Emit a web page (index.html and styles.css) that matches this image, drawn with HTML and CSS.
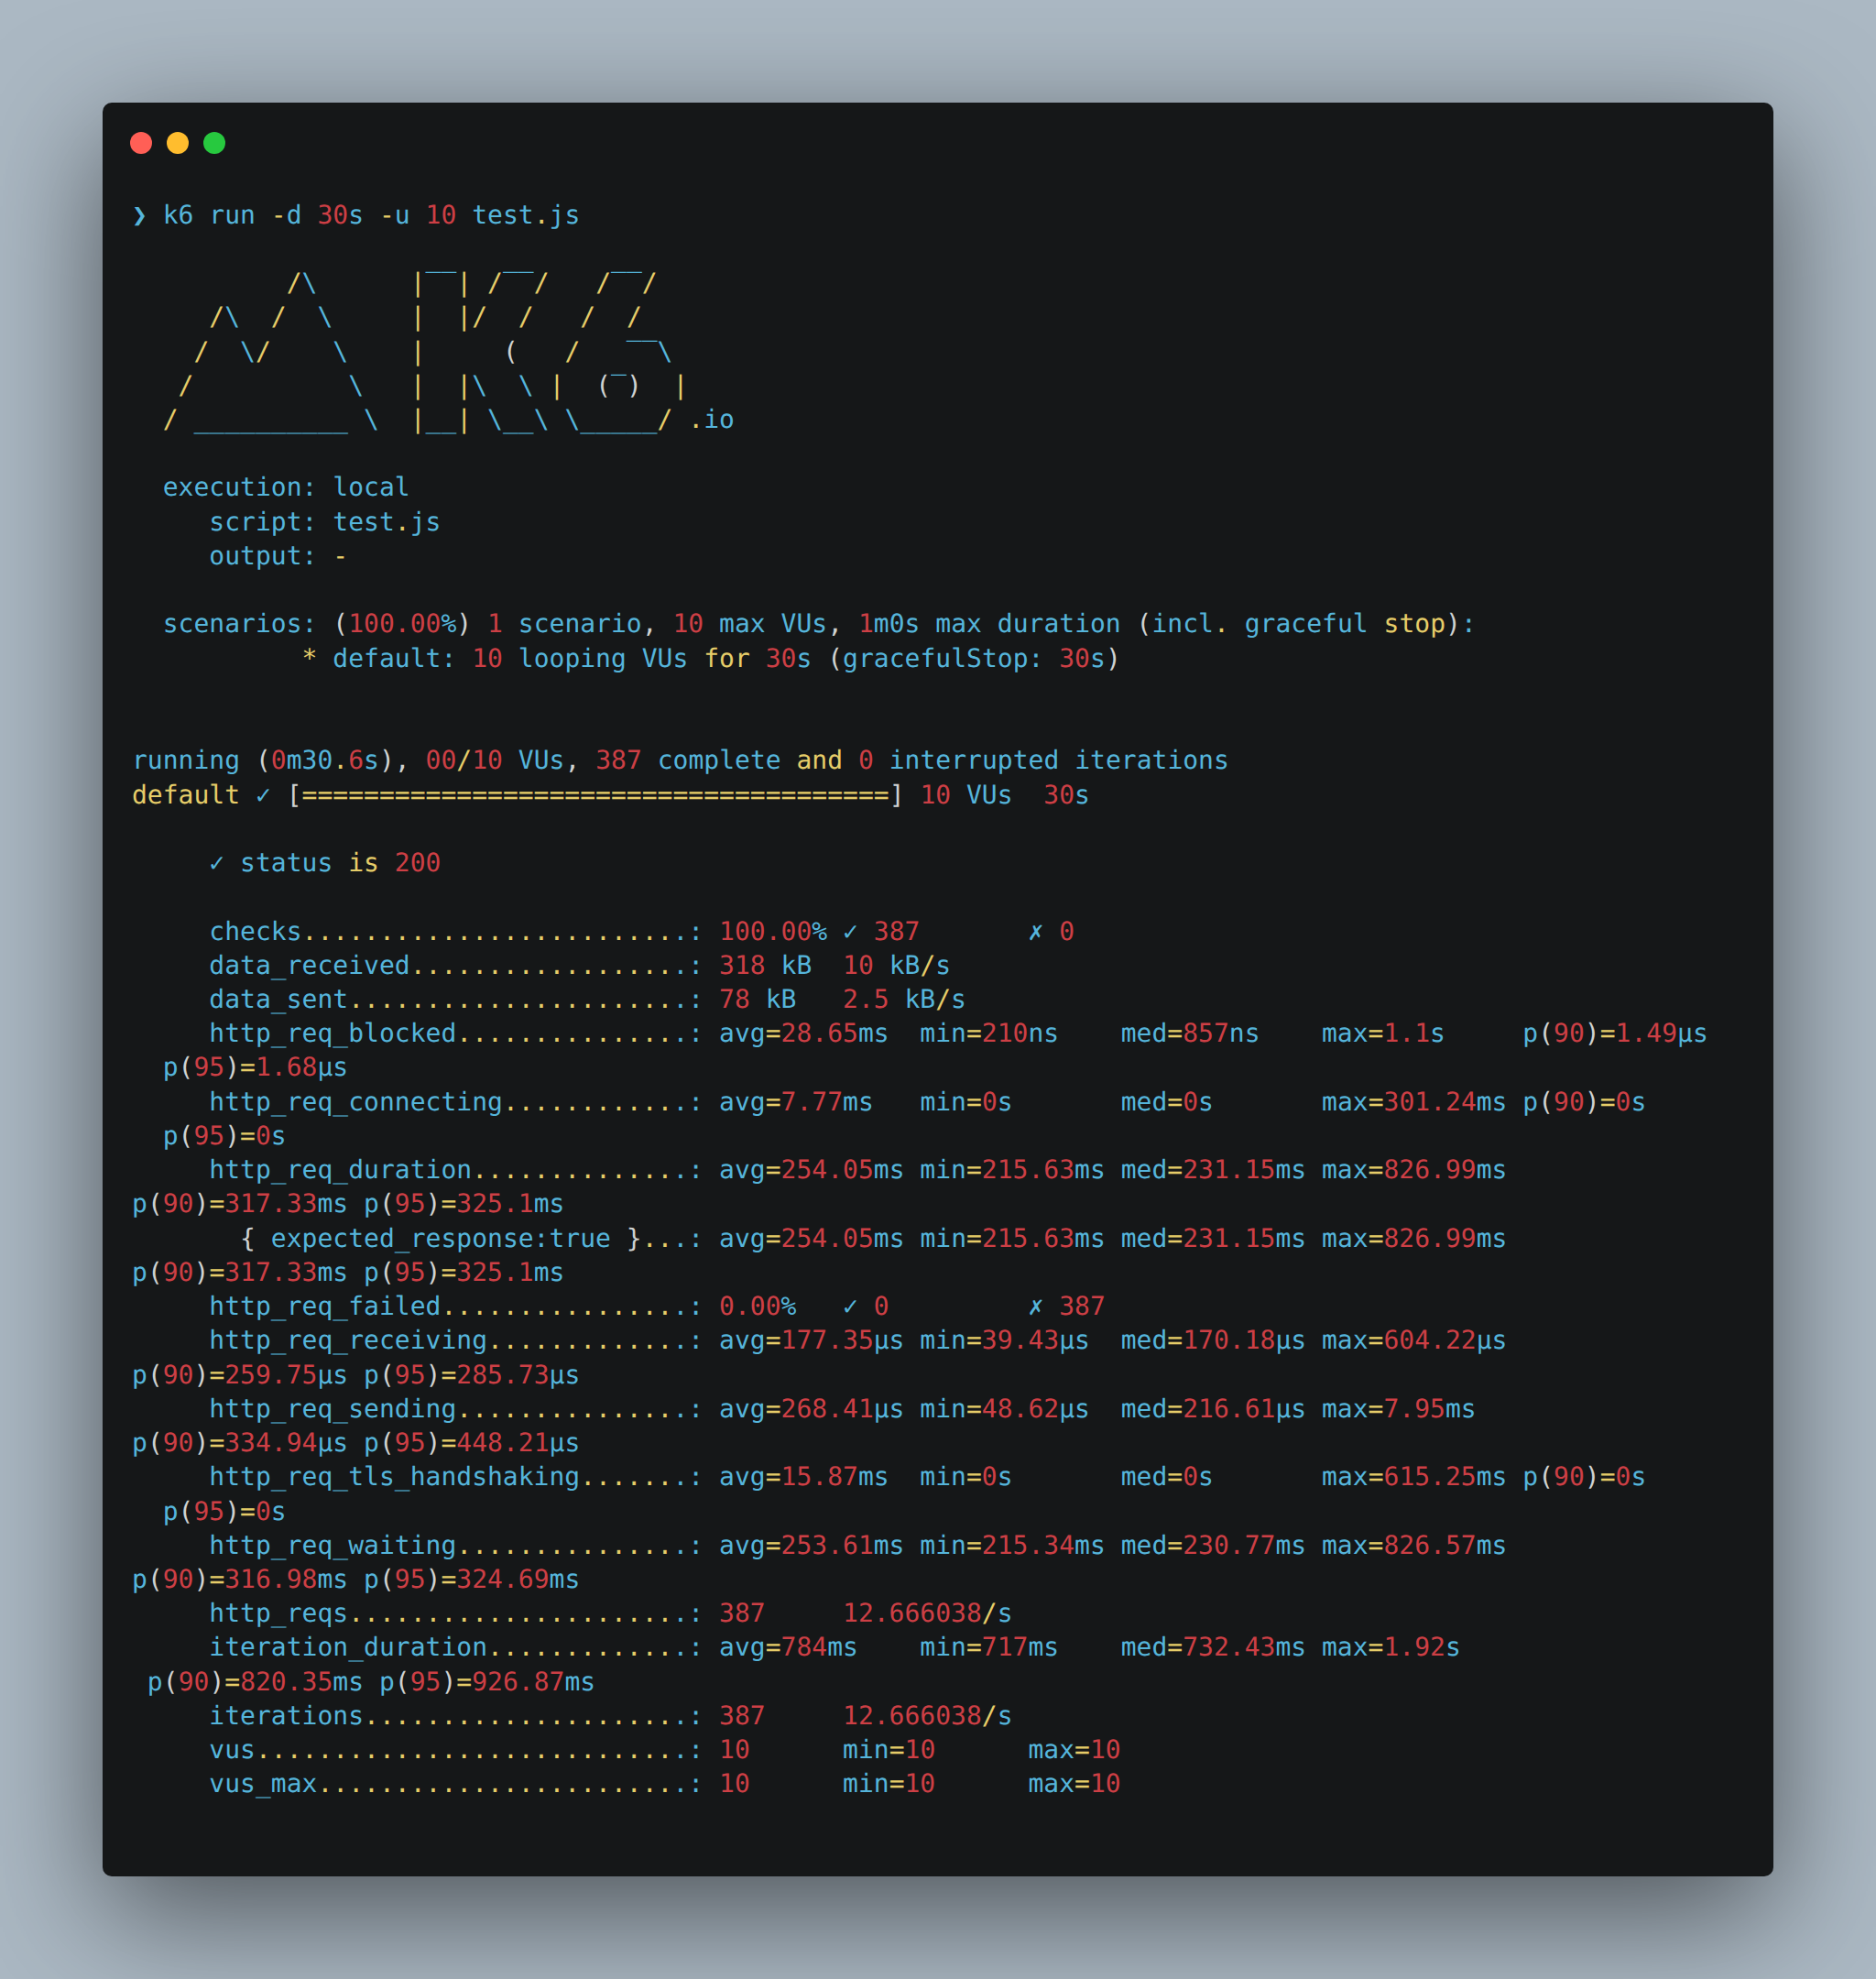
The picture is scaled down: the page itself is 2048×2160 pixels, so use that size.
FILE: index.html
```html
<!DOCTYPE html>
<html lang="en">
<head>
<meta charset="utf-8">
<title>k6 run</title>
<link rel="stylesheet" href="styles.css">
</head>
<body>
<main class="window">
<header class="titlebar"><span class="dot red"></span><span class="dot amber"></span><span class="dot green"></span></header>
<section class="code">
<div class="ln">❯ k6 run <i class="y">-</i>d <i class="r">30</i>s <i class="y">-</i>u <i class="r">10</i> test<i class="y">.</i>js</div>
<div class="ln"></div>
<div class="ln">          <i class="y">/</i>\      <i class="y">|</i>‾‾<i class="y">|</i> <i class="y">/</i>‾‾<i class="y">/</i>   <i class="y">/</i>‾‾<i class="y">/</i></div>
<div class="ln">     <i class="y">/</i>\  <i class="y">/</i>  \     <i class="y">|</i>  <i class="y">|/</i>  <i class="y">/</i>   <i class="y">/</i>  <i class="y">/</i></div>
<div class="ln">    <i class="y">/</i>  \<i class="y">/</i>    \    <i class="y">|</i>     <i class="w">(</i>   <i class="y">/</i>   ‾‾\</div>
<div class="ln">   <i class="y">/</i>          \   <i class="y">|</i>  <i class="y">|</i>\  \ <i class="y">|</i>  <i class="w">(</i>‾<i class="w">)</i>  <i class="y">|</i></div>
<div class="ln">  <i class="y">/</i> __________ \  <i class="y">|</i>__<i class="y">|</i> \__\ \_____<i class="y">/</i> <i class="y">.</i>io</div>
<div class="ln"></div>
<div class="ln">  execution: local</div>
<div class="ln">     script: test<i class="y">.</i>js</div>
<div class="ln">     output: <i class="y">-</i></div>
<div class="ln"></div>
<div class="ln">  scenarios: <i class="w">(</i><i class="r">100.00</i>%<i class="w">)</i> <i class="r">1</i> scenario<i class="w">,</i> <i class="r">10</i> max VUs<i class="w">,</i> <i class="r">1</i>m0s max duration <i class="w">(</i>incl<i class="y">.</i> graceful <i class="y">stop</i><i class="w">)</i>:</div>
<div class="ln">           <i class="y">*</i> default: <i class="r">10</i> looping VUs <i class="y">for</i> <i class="r">30</i>s <i class="w">(</i>gracefulStop: <i class="r">30</i>s<i class="w">)</i></div>
<div class="ln"></div>
<div class="ln"></div>
<div class="ln">running <i class="w">(</i><i class="r">0</i>m30<i class="y">.</i><i class="r">6</i>s<i class="w">),</i> <i class="r">00</i><i class="y">/</i><i class="r">10</i> VUs<i class="w">,</i> <i class="r">387</i> complete <i class="y">and</i> <i class="r">0</i> interrupted iterations</div>
<div class="ln"><i class="y">default</i> ✓ <i class="w">[</i><i class="y">======================================</i><i class="w">]</i> <i class="r">10</i> VUs  <i class="r">30</i>s</div>
<div class="ln"></div>
<div class="ln">     ✓ status <i class="y">is</i> <i class="r">200</i></div>
<div class="ln"></div>
<div class="ln">     checks<i class="y">........................</i>.: <i class="r">100.00</i>% ✓ <i class="r">387</i>       ✗ <i class="r">0</i></div>
<div class="ln">     data_received<i class="y">.................</i>.: <i class="r">318</i> kB  <i class="r">10</i> kB<i class="y">/</i>s</div>
<div class="ln">     data_sent<i class="y">.....................</i>.: <i class="r">78</i> kB   <i class="r">2.5</i> kB<i class="y">/</i>s</div>
<div class="ln">     http_req_blocked<i class="y">..............</i>.: avg<i class="y">=</i><i class="r">28.65</i>ms  min<i class="y">=</i><i class="r">210</i>ns    med<i class="y">=</i><i class="r">857</i>ns    max<i class="y">=</i><i class="r">1.1</i>s     p<i class="w">(</i><i class="r">90</i><i class="w">)</i><i class="y">=</i><i class="r">1.49</i>µs</div>
<div class="ln">  p<i class="w">(</i><i class="r">95</i><i class="w">)</i><i class="y">=</i><i class="r">1.68</i>µs</div>
<div class="ln">     http_req_connecting<i class="y">...........</i>.: avg<i class="y">=</i><i class="r">7.77</i>ms   min<i class="y">=</i><i class="r">0</i>s       med<i class="y">=</i><i class="r">0</i>s       max<i class="y">=</i><i class="r">301.24</i>ms p<i class="w">(</i><i class="r">90</i><i class="w">)</i><i class="y">=</i><i class="r">0</i>s</div>
<div class="ln">  p<i class="w">(</i><i class="r">95</i><i class="w">)</i><i class="y">=</i><i class="r">0</i>s</div>
<div class="ln">     http_req_duration<i class="y">.............</i>.: avg<i class="y">=</i><i class="r">254.05</i>ms min<i class="y">=</i><i class="r">215.63</i>ms med<i class="y">=</i><i class="r">231.15</i>ms max<i class="y">=</i><i class="r">826.99</i>ms</div>
<div class="ln">p<i class="w">(</i><i class="r">90</i><i class="w">)</i><i class="y">=</i><i class="r">317.33</i>ms p<i class="w">(</i><i class="r">95</i><i class="w">)</i><i class="y">=</i><i class="r">325.1</i>ms</div>
<div class="ln">       <i class="w">{</i> expected_response:true <i class="w">}</i><i class="y">..</i>.: avg<i class="y">=</i><i class="r">254.05</i>ms min<i class="y">=</i><i class="r">215.63</i>ms med<i class="y">=</i><i class="r">231.15</i>ms max<i class="y">=</i><i class="r">826.99</i>ms</div>
<div class="ln">p<i class="w">(</i><i class="r">90</i><i class="w">)</i><i class="y">=</i><i class="r">317.33</i>ms p<i class="w">(</i><i class="r">95</i><i class="w">)</i><i class="y">=</i><i class="r">325.1</i>ms</div>
<div class="ln">     http_req_failed<i class="y">...............</i>.: <i class="r">0.00</i>%   ✓ <i class="r">0</i>         ✗ <i class="r">387</i></div>
<div class="ln">     http_req_receiving<i class="y">............</i>.: avg<i class="y">=</i><i class="r">177.35</i>µs min<i class="y">=</i><i class="r">39.43</i>µs  med<i class="y">=</i><i class="r">170.18</i>µs max<i class="y">=</i><i class="r">604.22</i>µs</div>
<div class="ln">p<i class="w">(</i><i class="r">90</i><i class="w">)</i><i class="y">=</i><i class="r">259.75</i>µs p<i class="w">(</i><i class="r">95</i><i class="w">)</i><i class="y">=</i><i class="r">285.73</i>µs</div>
<div class="ln">     http_req_sending<i class="y">..............</i>.: avg<i class="y">=</i><i class="r">268.41</i>µs min<i class="y">=</i><i class="r">48.62</i>µs  med<i class="y">=</i><i class="r">216.61</i>µs max<i class="y">=</i><i class="r">7.95</i>ms</div>
<div class="ln">p<i class="w">(</i><i class="r">90</i><i class="w">)</i><i class="y">=</i><i class="r">334.94</i>µs p<i class="w">(</i><i class="r">95</i><i class="w">)</i><i class="y">=</i><i class="r">448.21</i>µs</div>
<div class="ln">     http_req_tls_handshaking<i class="y">......</i>.: avg<i class="y">=</i><i class="r">15.87</i>ms  min<i class="y">=</i><i class="r">0</i>s       med<i class="y">=</i><i class="r">0</i>s       max<i class="y">=</i><i class="r">615.25</i>ms p<i class="w">(</i><i class="r">90</i><i class="w">)</i><i class="y">=</i><i class="r">0</i>s</div>
<div class="ln">  p<i class="w">(</i><i class="r">95</i><i class="w">)</i><i class="y">=</i><i class="r">0</i>s</div>
<div class="ln">     http_req_waiting<i class="y">..............</i>.: avg<i class="y">=</i><i class="r">253.61</i>ms min<i class="y">=</i><i class="r">215.34</i>ms med<i class="y">=</i><i class="r">230.77</i>ms max<i class="y">=</i><i class="r">826.57</i>ms</div>
<div class="ln">p<i class="w">(</i><i class="r">90</i><i class="w">)</i><i class="y">=</i><i class="r">316.98</i>ms p<i class="w">(</i><i class="r">95</i><i class="w">)</i><i class="y">=</i><i class="r">324.69</i>ms</div>
<div class="ln">     http_reqs<i class="y">.....................</i>.: <i class="r">387</i>     <i class="r">12.666038</i><i class="y">/</i>s</div>
<div class="ln">     iteration_duration<i class="y">............</i>.: avg<i class="y">=</i><i class="r">784</i>ms    min<i class="y">=</i><i class="r">717</i>ms    med<i class="y">=</i><i class="r">732.43</i>ms max<i class="y">=</i><i class="r">1.92</i>s</div>
<div class="ln"> p<i class="w">(</i><i class="r">90</i><i class="w">)</i><i class="y">=</i><i class="r">820.35</i>ms p<i class="w">(</i><i class="r">95</i><i class="w">)</i><i class="y">=</i><i class="r">926.87</i>ms</div>
<div class="ln">     iterations<i class="y">....................</i>.: <i class="r">387</i>     <i class="r">12.666038</i><i class="y">/</i>s</div>
<div class="ln">     vus<i class="y">...........................</i>.: <i class="r">10</i>      min<i class="y">=</i><i class="r">10</i>      max<i class="y">=</i><i class="r">10</i></div>
<div class="ln">     vus_max<i class="y">.......................</i>.: <i class="r">10</i>      min<i class="y">=</i><i class="r">10</i>      max<i class="y">=</i><i class="r">10</i></div>
</section>
</main>
</body>
</html>
```

FILE: styles.css
```css
html, body {
  margin: 0;
  padding: 0;
}

body {
  box-sizing: border-box;
  width: 2048px;
  height: 2160px;
  padding: 112px;
  background: #abb8c3;
  overflow: hidden;
}

.window {
  box-sizing: border-box;
  width: 1824px;
  height: 1936px;
  background: #151718;
  border-radius: 10px;
  box-shadow: 0 40px 136px rgba(0, 0, 0, 0.55);
  overflow: hidden;
}

.titlebar {
  display: flex;
  gap: 16px;
  padding: 32px 30px 47.6px;
}

.dot {
  width: 24px;
  height: 24px;
  border-radius: 50%;
}

.red { background: #ff5f56; }
.amber { background: #ffbd2e; }
.green { background: #27c93f; }

.code {
  padding: 0 32px;
  font-family: "DejaVu Sans Mono", monospace;
  font-size: 28px;
  letter-spacing: 0.012px;
  text-rendering: geometricPrecision;
  color: #55b5db;
}

.ln {
  height: 37.24px;
  line-height: 37.24px;
  white-space: pre;
}

.ln i { font-style: normal; }
.y { color: #e6cd69; }
.r { color: #cd3f45; }
.w { color: #cfd2d1; }
```
